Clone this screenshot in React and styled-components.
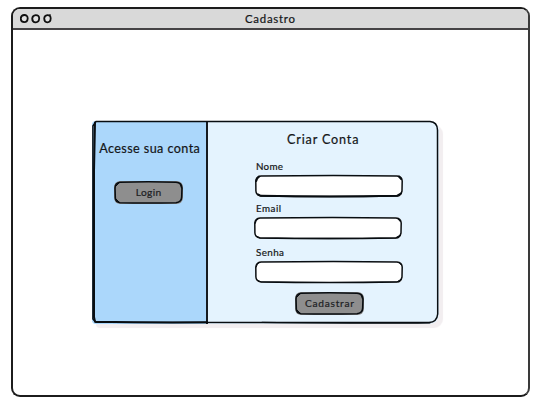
import React from 'react';
import styled, { createGlobalStyle } from 'styled-components';

const GlobalStyle = createGlobalStyle`
  * { box-sizing: border-box; }
  body { margin: 0; background: #fff; color: #141618; }
  body, button, input { font-family: Lato, "Noto Sans", sans-serif; }
`;

const Page = styled.div`
  height: 405px;
  padding: 7px 12px 8px 11px;
`;

const Window = styled.main`
  height: 390px;
  border: 2px solid #1c1c1c;
  border-right-color: #3a3a3a;
  border-radius: 9px;
  overflow: hidden;
  background: #fff;
`;

const TitleBar = styled.header`
  height: 21px;
  display: grid;
  grid-template-columns: 1fr auto 1fr;
  align-items: center;
  padding: 0 8px 0 7px;
  background: #d9d9d9;
  border-bottom: 2px solid #454345;
`;

const Label = styled.span`
  display: block;
  white-space: nowrap;
  font-size: ${(p) => p.$size}px;
  line-height: 14px;
  letter-spacing: ${(p) => p.$spacing}px;
  margin-right: ${(p) => -p.$spacing}px;
  -webkit-text-stroke: 0.2px currentColor;
`;

const Controls = styled.svg`
  display: block;
  width: 34px;
  height: 12px;
`;

const Content = styled.section`
  padding: 91px 0 0 79px;
`;

const Card = styled.div`
  position: relative;
  width: 347px;
  height: 203px;
  display: grid;
  grid-template-columns: 116px 1fr;
  border-radius: 4px 9px 9px 4px;
  background: #e4f3fe;
  box-shadow: 4px 4px 1px #f2eef0;
`;

const LoginPane = styled.aside`
  display: flex;
  flex-direction: column;
  align-items: center;
  padding: 21px 0 0 1px;
  gap: 25px;
  border-radius: 4px 0 0 4px;
  border-right: 2px solid #151a20;
  background: #abd7fb;
`;

const SignupPane = styled.form`
  display: flex;
  flex-direction: column;
  padding: 12px 0 0 47px;
`;

const Heading = styled.h2`
  margin: 0 0 0 32px;
  font-weight: 400;
`;

const Field = styled.label`
  display: block;
  margin-top: ${(p) => p.$gap}px;
`;

const FieldName = styled(Label)`
  padding-left: 1px;
`;

const InputFrame = styled.span`
  position: relative;
  display: block;
  width: 148px;
  height: 22px;
  margin: ${(p) => p.$drop}px 0 0 ${(p) => p.$shift || 0}px;
`;

const Input = styled.input`
  display: block;
  width: 100%;
  height: 100%;
  padding: 0 8px;
  border: 0;
  border-radius: 6px;
  outline: 0;
  background: #fff;
  font-size: 10px;
`;

const Button = styled.button`
  position: relative;
  width: 69px;
  height: 23px;
  display: flex;
  align-items: center;
  justify-content: center;
  padding: 0 0 2px;
  border: 0;
  border-radius: 6px;
  background: #8e8e8e;
  color: #202124;
`;

const LoginRow = styled.div`
  width: 100%;
  padding-left: 21px;
`;

const SubmitRow = styled.div`
  padding: 9px 0 0 40px;
`;

const Ink = styled.svg`
  position: absolute;
  inset: 0;
  width: 100%;
  height: 100%;
  overflow: visible;
  pointer-events: none;
  fill: none;
  stroke: #080d11;
  stroke-linecap: round;
  stroke-linejoin: round;
`;

function WindowControls() {
  return (
    <Controls viewBox="0 0 34 12" fill="#e2e2e2" stroke="#111" strokeWidth="1.8">
      <path d="M4.2 2Q7.6 1.9 7.7 5.4Q7.5 9.1 4.2 9.2Q.9 9 .7 5.6Q.9 2.4 4.2 2Z" />
      <path d="M15.7 2.1Q19.1 2 19.2 5.5Q18.8 9.4 15.6 9.3Q12.3 9.1 12.2 5.6Q12.5 2.5 15.7 2.1Z" />
      <path d="M27.4 2.1Q30.6 2 30.7 5.5Q30.5 9.3 27.4 9.3Q24.3 9.1 24.2 5.5Q24.4 2.5 27.4 2.1ZM29.2 2.2L30.8 2.5" />
    </Controls>
  );
}

function InputInk({ weight = 1 }) {
  return (
    <Ink viewBox="0 0 148 22">
      <path strokeWidth="1.5" d="M6 1Q75 .1 142 .9Q147 1.5 147.2 6L147 16Q146 20.8 142 21Q75 22.2 6 21Q1 20 .9 16L.8 6Q1.2 1.5 6 1Z" />
      <path strokeWidth={weight} d="M3 19.5L6 20.8Q75 22.2 142 20.8L145.8 18.5M1.2 6Q1.8 3 4 1.6M144 1.5L146.2 4" />
    </Ink>
  );
}

function ButtonInk() {
  return (
    <Ink viewBox="0 0 69 23">
      <path strokeWidth="1.6" d="M6 1.2Q35 .4 62 1.2Q67.8 1.5 68 7L67.7 16Q67.5 21.2 62 21.7Q35 22.3 6 21.8Q1.5 21 1.3 17L1 7Q1.2 2 6 1.2Z" />
      <path strokeWidth="1" d="M2 18L5 21M66.3 3.4L67.5 7M2 5L5 2" />
    </Ink>
  );
}

function CardInk() {
  return (
    <Ink viewBox="0 0 347 203">
      <path strokeWidth="1.5" d="M4 .5Q160 0 338 .5Q345.3 1 345.5 9L345.7 193Q345 201 337 201.6Q170 201.2 4 201.2L.9 198V5Z" />
      <path strokeWidth="2" d="M3 1.5L2 50V196L3 200.7Q60 201.8 115 201.3" />
      <path strokeWidth="1.3" d="M338 201.8Q280 202.6 170 201.4" />
    </Ink>
  );
}

function FormField({ label, type = 'text', gap, drop = 2, shift, spacing, weight }) {
  return (
    <Field $gap={gap}>
      <FieldName $size={9.8} $spacing={spacing}>{label}</FieldName>
      <InputFrame $shift={shift} $drop={drop}>
        <Input type={type} aria-label={label} />
        <InputInk weight={weight} />
      </InputFrame>
    </Field>
  );
}

export default function App() {
  return (
    <>
      <GlobalStyle />
      <Page>
        <Window>
          <TitleBar>
            <WindowControls />
            <Label $size={11.4} $spacing={0.75}>Cadastro</Label>
          </TitleBar>
          <Content>
            <Card>
              <LoginPane>
                <Label $size={12.6} $spacing={0.42}>Acesse sua conta</Label>
                <LoginRow>
                  <Button type="button">
                    <Label $size={10.2} $spacing={0.4}>Login</Label>
                    <ButtonInk />
                  </Button>
                </LoginRow>
              </LoginPane>
              <SignupPane>
                <Heading><Label $size={12.6} $spacing={0.85}>Criar Conta</Label></Heading>
                <FormField label="Nome" gap={12} spacing={0.25} weight={2} />
                <FormField label="Email" gap={4} shift={-1} spacing={0.5} weight={1.3} />
                <FormField label="Senha" gap={6} drop={2} spacing={0.4} />
                <SubmitRow>
                  <Button type="button">
                    <Label $size={10.2} $spacing={0.72}>Cadastrar</Label>
                    <ButtonInk />
                  </Button>
                </SubmitRow>
              </SignupPane>
              <CardInk />
            </Card>
          </Content>
        </Window>
      </Page>
    </>
  );
}
